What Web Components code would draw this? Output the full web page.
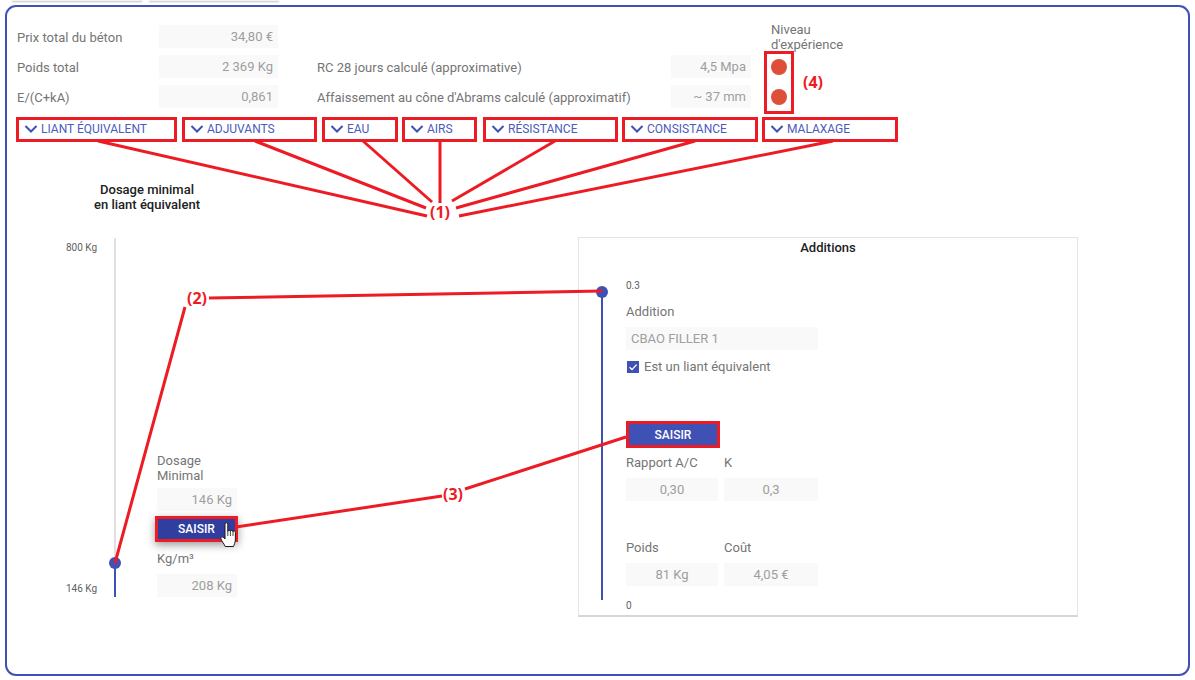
<!DOCTYPE html>
<html lang="fr">
<head>
<meta charset="UTF-8">
<title>Formulation béton</title>
<style>
  html, body { margin: 0; padding: 0; background: #fff; }
  body { font-family: Roboto, "Liberation Sans", sans-serif; width: 1195px; height: 680px; overflow: hidden; position: relative; }
  .form { display: grid; grid-template-columns: 142px 119px 39px 354px 80px 20px 100px; grid-auto-rows: 24px; row-gap: 6px; margin-left: 1px; }
  .filters { display: flex; margin-top: 8px; }
  .lower { display: grid; grid-template-columns: 562px 500px; margin-top: 40px; }
  .title { grid-column: 1 / 3; width: 262px; height: 30px; margin-bottom: 25px; text-align: center; font-size: 13px; font-weight: 500; line-height: 15px; color: #212121; }
  .dosage { display: flex; height: 360px; }
  .dosage-form { margin-left: 41px; align-self: flex-end; width: 80px; }
</style>
</head>
<body>

<page-tabs></page-tabs>
<main-card>
  <div class="form">
    <field-label>Prix total du béton</field-label>
    <read-field style="grid-column:2">34,80 €</read-field>
    <field-label style="grid-column:7;height:30px;width:90px">Niveau d'expérience</field-label>

    <field-label style="grid-column:1">Poids total</field-label>
    <read-field style="grid-column:2">2 369 Kg</read-field>
    <field-label style="grid-column:4">RC 28 jours calculé (approximative)</field-label>
    <read-field style="grid-column:5">4,5 Mpa</read-field>
    <level-dot style="grid-column:7"></level-dot>

    <field-label style="grid-column:1">E/(C+kA)</field-label>
    <read-field style="grid-column:2">0,861</read-field>
    <field-label style="grid-column:4">Affaissement au cône d'Abrams calculé (approximatif)</field-label>
    <read-field style="grid-column:5">~ 37 mm</read-field>
    <level-dot style="grid-column:7"></level-dot>
  </div>

  <div class="filters">
    <filter-toggle style="width:161px">LIANT ÉQUIVALENT</filter-toggle>
    <filter-toggle style="width:135px;margin-left:5px">ADJUVANTS</filter-toggle>
    <filter-toggle style="width:76px;margin-left:5px">EAU</filter-toggle>
    <filter-toggle style="width:75px;margin-left:4px">AIRS</filter-toggle>
    <filter-toggle style="width:135px;margin-left:6px">RÉSISTANCE</filter-toggle>
    <filter-toggle style="width:136px;margin-left:4px">CONSISTANCE</filter-toggle>
    <filter-toggle style="width:136px;margin-left:4px">MALAXAGE</filter-toggle>
  </div>

  <div class="lower">
    <div class="title">Dosage minimal<br>en liant équivalent</div>
    <div class="dosage">
      <tick-column style="margin-left:50px;width:48px;padding:5px 0 2px">
        <div>800 Kg</div>
        <div>146 Kg</div>
      </tick-column>
      <range-track fill="34px" style="margin-top:1px;height:359px"></range-track>
      <div class="dosage-form">
        <field-label>Dosage<br>Minimal</field-label>
        <read-field style="margin-top:5px">146 Kg</read-field>
        <saisir-button active style="margin:5px -2px 0;height:26px;width:83px">SAISIR</saisir-button>
        <field-label style="margin-top:9px">Kg/m³</field-label>
        <read-field style="margin-top:8px">208 Kg</read-field>
      </div>
    </div>
    <additions-panel>
      <tick-column><div>0.3</div></tick-column>
      <field-label style="margin-top:12px">Addition</field-label>
      <read-field align="left" style="margin-top:8px">CBAO FILLER 1</read-field>
      <check-row style="margin-top:9px">Est un liant équivalent</check-row>
      <saisir-button style="margin-top:47px;height:27px;width:94px">SAISIR</saisir-button>
      <field-pair style="margin-top:7px">
        <field-label>Rapport A/C</field-label><field-label>K</field-label>
        <read-field align="center">0,30</read-field><read-field align="center">0,3</read-field>
      </field-pair>
      <field-pair style="margin-top:39px">
        <field-label>Poids</field-label><field-label>Coût</field-label>
        <read-field align="center">81 Kg</read-field><read-field align="center">4,05 €</read-field>
      </field-pair>
      <tick-column style="margin-top:14px"><div>0</div></tick-column>
    </additions-panel>
  </div>
</main-card>
<annotation-layer></annotation-layer>

<script>
(function () {
    const BLUE = '#3f51b5';
    const RED = '#ed1c24';

    class PageTabs extends HTMLElement {
        constructor() {
            super();
            this.attachShadow({ mode: 'open' }).innerHTML = `
            <style>
              :host { display: flex; gap: 7px; height: 3px; padding-left: 12px; overflow: hidden; }
              i { display: block; width: 130px; height: 1px; background: #f2f2f2; box-shadow: 0 1px 2px rgba(0,0,0,.35); }
            </style>
            <i></i><i></i>`;
        }
    }

    class MainCard extends HTMLElement {
        constructor() {
            super();
            this.attachShadow({ mode: 'open' }).innerHTML = `
            <style>
              :host { display: block; box-sizing: border-box; width: 1185px; height: 671px; margin: 2px 0 0 5px; padding: 18px 9px 0; border: 2px solid ${BLUE}; border-radius: 11px; }
            </style>
            <slot></slot>`;
        }
    }

    class FieldLabel extends HTMLElement {
        constructor() {
            super();
            this.attachShadow({ mode: 'open' }).innerHTML = `
            <style>
              :host { display: block; font-size: 13px; line-height: 15px; color: #757575; align-self: center; }
            </style>
            <slot></slot>`;
        }
    }

    class ReadField extends HTMLElement {
        constructor() {
            super();
            const align = this.getAttribute('align') || 'right';
            this.attachShadow({ mode: 'open' }).innerHTML = `
            <style>
              :host { display: block; box-sizing: border-box; height: 23px; padding: 0 5px; background: #f9f9f9; color: #9e9e9e; font-size: 13px; line-height: 24px; text-align: ${align}; white-space: nowrap; }
            </style>
            <slot></slot>`;
        }
    }

    class LevelDot extends HTMLElement {
        constructor() {
            super();
            this.attachShadow({ mode: 'open' }).innerHTML = `
            <style>
              :host { display: block; width: 16px; height: 16px; border-radius: 50%; background: #dd4f38; align-self: center; }
            </style>`;
        }
    }

    class FilterToggle extends HTMLElement {
        constructor() {
            super();
            this.attachShadow({ mode: 'open' }).innerHTML = `
            <style>
              :host { display: flex; align-items: center; box-sizing: border-box; height: 25px; padding: 0 0 2px 5px; border: 3px solid ${RED}; color: #4a5bbd; font-size: 12px; white-space: nowrap; }
              svg { width: 14px; height: 10px; margin-right: 3px; flex: none; }
            </style>
            <svg viewBox="0 0 14 10"><path d="M1.5 2 7 7.5 12.5 2" fill="none" stroke="${BLUE}" stroke-width="2"/></svg>
            <slot></slot>`;
        }
    }

    class RangeTrack extends HTMLElement {
        constructor() {
            super();
            const fill = this.getAttribute('fill') || '100%';
            this.attachShadow({ mode: 'open' }).innerHTML = `
            <style>
              :host { display: block; position: relative; width: 2px; background: #e0e0e0; flex: none; }
              .fill { position: absolute; left: 0; right: 0; bottom: 0; height: ${fill}; background: ${BLUE}; }
              .dot { position: absolute; left: -5px; top: -6px; width: 12px; height: 12px; border-radius: 50%; background: ${BLUE}; }
            </style>
            <div class="fill"><div class="dot"></div></div>`;
        }
    }

    class TickColumn extends HTMLElement {
        constructor() {
            super();
            this.attachShadow({ mode: 'open' }).innerHTML = `
            <style>
              :host { display: flex; flex-direction: column; justify-content: space-between; box-sizing: border-box; font-size: 10px; line-height: 12px; color: #616161; }
            </style>
            <slot></slot>`;
        }
    }

    class SaisirButton extends HTMLElement {
        constructor() {
            super();
            this.attachShadow({ mode: 'open' }).innerHTML = `
            <style>
              :host { display: flex; align-items: center; justify-content: center; box-sizing: border-box; border: 3px solid ${RED}; background: ${BLUE}; color: #fff; font-size: 12px; font-weight: 500; }
              :host([active]) { background: #303f9f; box-shadow: 0 3px 8px rgba(0,0,0,.4); }
            </style>
            <slot></slot>`;
        }
    }

    class AdditionsPanel extends HTMLElement {
        constructor() {
            super();
            this.attachShadow({ mode: 'open' }).innerHTML = `
            <style>
              :host { display: block; box-sizing: border-box; height: 380px; border: 1px solid #e4e4e4; border-bottom: 2px solid #d6d6d6; }
              h2 { margin: 2px 0 0; text-align: center; font-size: 13px; font-weight: 500; line-height: 15px; color: #212121; }
              .body { display: flex; margin-top: 37px; padding-left: 22px; }
              .content { margin-left: 23px; width: 192px; margin-top: -12px; }
            </style>
            <h2>Additions</h2>
            <div class="body">
              <range-track style="height:308px"></range-track>
              <div class="content"><slot></slot></div>
            </div>`;
        }
    }

    class CheckRow extends HTMLElement {
        constructor() {
            super();
            this.attachShadow({ mode: 'open' }).innerHTML = `
            <style>
              :host { display: flex; align-items: center; height: 15px; font-size: 13px; color: #757575; white-space: nowrap; }
              svg { width: 12px; height: 12px; margin: 0 5px 0 1px; flex: none; }
            </style>
            <svg viewBox="0 0 12 12"><rect width="12" height="12" fill="${BLUE}"/><path d="M2.6 6.2 5 8.6 9.6 3.6" fill="none" stroke="#fff" stroke-width="1.4"/></svg>
            <slot></slot>`;
        }
    }

    class FieldPair extends HTMLElement {
        constructor() {
            super();
            this.attachShadow({ mode: 'open' }).innerHTML = `
            <style>
              :host { display: grid; grid-template-columns: 92px 94px; column-gap: 6px; row-gap: 8px; }
            </style>
            <slot></slot>`;
        }
    }

    // red marks drawn by hand over the screenshot
    class AnnotationLayer extends HTMLElement {
        constructor() {
            super();
            const lines = [
                [98, 141, 427, 216], [255, 141, 426, 208], [363, 141, 432, 202], [440, 141, 440, 203],
                [555, 141, 452, 201], [695, 141, 456, 208], [833, 141, 459, 216],
                [115, 563, 185, 307], [209, 298, 602, 291],
                [236, 527, 442, 496], [465, 489, 626, 437]
            ];
            const drawn = lines.map(l => `<line x1="${l[0]}" y1="${l[1]}" x2="${l[2]}" y2="${l[3]}"/>`).join('');
            this.attachShadow({ mode: 'open' }).innerHTML = `
            <style>
              :host { display: block; position: absolute; left: 0; top: 0; width: 1195px; height: 680px; pointer-events: none; }
              svg { position: absolute; left: 0; top: 0; }
              span { position: absolute; width: 40px; margin-left: -20px; text-align: center; font: bold 16px/20px "Open Sans", "Liberation Sans", sans-serif; color: ${RED}; }
            </style>
            <svg width="1195" height="680" viewBox="0 0 1195 680">
              <g stroke="${RED}" stroke-width="3" fill="none">${drawn}</g>
              <rect x="765.5" y="52.5" width="27" height="60" fill="none" stroke="${RED}" stroke-width="3"/>
              <path transform="translate(220 522)" d="M5 2.2a1.4 1.4 0 0 1 2.8 0V9.5a1.3 1.3 0 0 1 2.6 0 1.3 1.3 0 0 1 2.6 .4 1.2 1.2 0 0 1 2.4 .6V17c0 3.5-1.5 6-1.9 7.5H5.2C4 21.5 1.8 19.5 .9 16.8c-.5-1.5 1-2.6 2.2-1.6L5 17z" fill="#fff" stroke="#1a1a1a" stroke-width="1"/>
              <path transform="translate(220 522)" d="M7.8 9.5V14M10.4 9.5V14M13 10V14" stroke="#1a1a1a" stroke-width=".8"/>
            </svg>
            <span style="left:440px;top:202px">(1)</span>
            <span style="left:197px;top:288px">(2)</span>
            <span style="left:453px;top:484px">(3)</span>
            <span style="left:813px;top:72px">(4)</span>`;
        }
    }

    customElements.define('page-tabs', PageTabs);
    customElements.define('main-card', MainCard);
    customElements.define('field-label', FieldLabel);
    customElements.define('read-field', ReadField);
    customElements.define('level-dot', LevelDot);
    customElements.define('filter-toggle', FilterToggle);
    customElements.define('range-track', RangeTrack);
    customElements.define('tick-column', TickColumn);
    customElements.define('saisir-button', SaisirButton);
    customElements.define('additions-panel', AdditionsPanel);
    customElements.define('check-row', CheckRow);
    customElements.define('field-pair', FieldPair);
    customElements.define('annotation-layer', AnnotationLayer);
})();
</script>
</body>
</html>
